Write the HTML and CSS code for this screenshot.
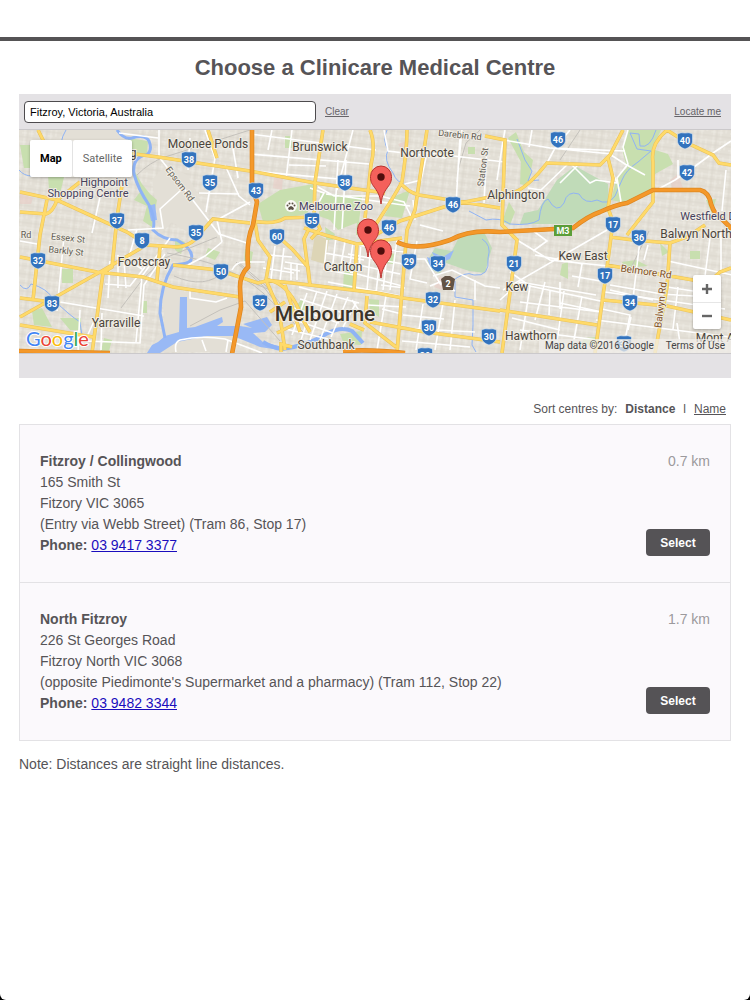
FILE: index.html
```html
<!DOCTYPE html>
<html lang="en">
<head>
<meta charset="utf-8">
<meta name="viewport" content="width=device-width, initial-scale=1">
<title>Choose a Clinicare Medical Centre</title>
<link rel="stylesheet" href="styles.css">
</head>
<body>
<div class="page">
  <header class="top-bar"></header>
  <main class="content">
    <h1 class="title">Choose a Clinicare Medical Centre</h1>

    <section class="finder" aria-label="Map of centres">
      <form class="search">
        <input class="search-input" type="text" aria-label="Location" value="Fitzroy, Victoria, Australia">
        <a class="small-link" href="#clear">Clear</a>
        <a class="small-link locate" href="#locate">Locate me</a>
      </form>
      <div class="map">
        <svg class="map-art" viewBox="19 130 712 223" preserveAspectRatio="xMidYMid slice" role="img" aria-label="Street map of Melbourne">
          <defs>
            <pattern id="streets" width="19" height="17" patternUnits="userSpaceOnUse" patternTransform="rotate(7)">
              <path d="M0 2H19M0 10H12M3 0V17M10 2V17M15 0V10" stroke="#efece5" stroke-width=".8" fill="none"/>
              <path d="M0 6H19M6 0V17M0 14H19" stroke="#d8d4ca" stroke-width=".7" fill="none"/>
            </pattern>
            <g id="shield">
              <path d="M-7.500-7Q-4-9 0-8Q4-9 7.500-7V1Q6.500 6 0 8Q-6.500 6-7.500 1Z" fill="#3373bd" stroke="#dce8f2" stroke-width=".6"/>
            </g>
            <g id="pin">
              <path d="M0 0C-1.200-10-4-13-7.500-18C-9-20-10.500-22-10.500-27.500A10.500 10.500 0 0 1 10.500-27.500C10.500-22 9-20 7.500-18C4-13 1.200-10 0 0Z" fill="#f4605b" stroke="#b8322e" stroke-width="1"/>
              <circle cx="0" cy="-27" r="3.700" fill="#4f0d0c"/>
            </g>
          </defs>
          <rect x="19" y="130" width="712" height="223" fill="#e3dfd6"/>
          <rect x="19" y="130" width="712" height="223" fill="url(#streets)"/>

          <g class="land">
            <path d="M160 278L184 292L238 300L232 352H148L165 325Z"/>
            <path d="M152 180L168 164L188 176L218 236L200 240L172 222L160 235Z"/>
            <path d="M62 130H128L146 142L134 155H62Z"/>
            <path d="M345 240L372 238L368 263L345 260Z"/>
          </g>
          <g class="park">
            <path d="M20 145H34V168H24ZM48 175L64 177L60 194L49 190Z"/>
            <path d="M128 138L148 141L147 154L135 157L129 150ZM134 170L142 184L150 194L157 200L152 227L143 221L147 206L134 200L140 192Z"/>
            <path d="M285 136H292V148H285ZM280 190L313 184L314 198L307 214L263 222L258 204Z"/>
            <path d="M320 193L362 197L359 222L338 230L330 220L319 216ZM357 222H371V237L356 235Z"/>
            <path d="M440 150H448V158H440ZM468 147H475V154H468ZM395 196L410 190L402 218L384 216Z"/>
            <path d="M508 138L516 132L524 152L533 160L528 186L520 184L521 162ZM509 202L515 212L510 225L502 222Z"/>
            <path d="M628 130H661L652 149L668 154L673 164L655 174L651 194L626 203L611 200L617 177L627 168L622 149Z"/>
            <path d="M344 270L354 263L354 289L343 288ZM369 299L379 300L379 317L370 311ZM384 252L396 254L393 264L382 263Z"/>
            <path d="M62 269H73V283H62ZM32 311L42 308L52 327L34 325ZM60 318H81V330H70ZM142 301H147V313H142ZM175 238L185 242L181 254L175 250ZM104 338L112 340L109 351H101Z"/>
            <path d="M340 334L362 331L361 345L344 344ZM302 299L307 308L301 316L294 308ZM325 227L335 234L333 240H326Z"/>
            <path d="M562 264L568 262L568 279L560 275ZM622 262L636 260L648 266L624 268ZM690 251H700V259H690ZM660 243L669 252L662 256ZM694 297H707V302H694ZM584 338L596 337L594 345L581 344ZM706 200L716 199L712 214Z"/>
            <path d="M208 248L220 252L215 260L205 256ZM245 249L253 252L251 264L244 262Z"/>
          </g>
          <g class="reserve">
            <path d="M557 180L575 166L608 184L609 205L586 218L572 224H520L524 213L538 210Z"/>
            <path d="M427 261L435 248L452 251L459 237L484 232L492 248L485 273L469 271L446 263L440 274L430 269Z"/>
          </g>
          <path class="suburb" d="M274 178L283 176L282 190L273 188ZM398 144L407 141L404 153ZM440 276L446 279L442 290L434 287ZM20 193L33 198L31 204L20 204ZM670 180L678 174L683 188H672Z"/>
          <path class="cemetery" d="M315 234L329 240L325 264L311 260Z"/>

          <g class="water">
            <path d="M165 336L179 332L180 297H187V328L195 327L222 317L223 322L217 326H240L252 328L243 324L267 317L272 325L265 332L253 333L263 342L283 347L280 350L260 347L233 336H207L177 342L160 353H147L152 345L158 342Z"/>
            <path d="M427 257L436 260L432 252L443 257L454 250L450 259L440 263V269L430 267Z"/>
            <path d="M148 206L155 204L157 220L151 221Z"/>
          </g>
          <g class="river">
            <path d="M117 130Q124 140 132 138Q145 134 149 141Q153 151 146 155Q132 157 134 174Q138 189 149 205Q156 219 153 230Q163 240 177 240Q195 250 191 260Q189 264 173 265Q160 287 160 313L165 338" stroke-width="3"/>
            <path d="M263 342Q273 348 282 349Q310 345 326 334Q341 326 352 331L363 343" stroke-width="4"/>
            <path d="M387 130Q382 140 388 150Q383 160 393 173Q397 184 407 184" stroke-width="1"/>
            <path d="M656 130Q650 149 640 146L639 134L630 133L637 149L651 151L638 162Q626 170 622 180L615 196Q608 206 597 200Q585 205 579 194Q567 190 564 203Q557 215 548 199Q541 201 539 220Q530 226 510 224Q500 217 486 220L469 211" stroke-width="1"/>
            <path d="M517 139L525 160L532 171L528 181L539 180" stroke-width="1"/>
            <path d="M20 285Q27 293 31 284Q47 288 54 300Q69 315 80 322L82 336" stroke-width="1"/>
            <path d="M473 300V325L472 345L476 352M455 281V297L473 300M450 283Q465 270 474 275Q490 277 488 258Q492 245 482 239" stroke-width="1"/>
            <path d="M66 130Q58 143 63 153Q44 170 32 176Q24 176 19 170" stroke-width="1"/>
          </g>

          <g class="rail">
            <path d="M137 175Q150 162 165 157L250 130M167 253Q230 263 263 293L304 333M121 308L142 280L165 258L217 237M174 276Q205 290 225 271L270 290M190 326L220 310L245 301L280 341M480 130L466 143L458 170M560 160L580 130M630 270L649 231M236 262L262 285L278 305M238 262L265 285L280 303"/>
          </g>
          <g class="street">
            <path d="M159 130L159 157L185 190L219 234L250 244M119 133L158 138M190 138L188 170M205 130L215 158L206 212M170 238L142 276L136 342M60 302L144 316M64 236L57 311M95 319L85 341L140 343L144 285L165 254M222 242L205 256L188 265M222 242L217 220L250 202M225 165L239 196L250 205M100 197L92 233M128 230L163 228L160 209L181 190M20 241L37 244M105 284L130 286L145 267M110 261L108 298M80 310L78 352M118 255V288M124 260L126 288M137 229L128 260L142 269M102 313L101 350M232 142L238 178M199 193L239 194M232 270Q236 262 244 262H265"/>
            <path d="M250 134L376 150M250 154L369 164M250 171L350 180M272 130L268 150M292 130L286 179M353 130L337 190M318 187L334 196L380 196L404 202L411 216M326 194L410 206M338 160L334 230M346 160L342 229M384 130L388 151L446 158M447 130L460 136L456 205M462 130L457 182M487 147L484 203M401 185L421 180L427 153L505 162M413 200L415 220M368 202L363 232M289 165L326 166M310 188L324 193L319 202"/>
            <path d="M504 140L550 148L625 151M532 130L529 147M570 130L555 148L547 163M551 148L611 154M611 155L625 164L645 175M570 163L590 183L596 180L617 183L611 169M570 162L541 190L528 188M577 166L560 183M628 130L623 147L628 164L617 178L621 202M653 192L675 180L694 167L713 153L731 141M726 170L722 211M678 160V178"/>
            <path d="M325 253L364 260M326 270L354 275M327 240L324 270M336 237L332 271M345 242L340 270M353 242L349 272M361 242L359 270M371 244L367 290M380 257L376 293M389 238L383 290M397 240L390 290M357 245L404 252M348 254L403 264M349 263L400 274M350 272L402 286M328 282L401 296M386 296L377 350M382 309L402 314M367 305L406 307M381 285L405 288M409 259L425 259L441 285M417 241L410 279L427 283M423 304L416 350M443 303L435 350M403 315L444 319M401 328L475 332M402 341L470 347M433 276L452 270L485 286L500 288M455 291L440 282L430 286M455 300L450 350M475 280V300"/>
            <path d="M300 299L343 313M294 308L339 323M289 318L333 333M286 329L328 339M307 293L292 335M317 291L301 340M327 291L310 340M337 294L320 340M348 297L331 337M356 303L343 327M299 287L359 303M268 255L292 257M263 268L294 273M275 246L271 279M284 248L280 281M352 300L372 330M285 262L304 265M284 268L300 271M291 263V280M297 264V280"/>
            <path d="M517 240L550 260L608 266M503 290L607 230M500 300L520 282L596 295M535 255L583 264M545 282L535 320M550 291L549 315M564 291L557 342M582 296L574 340M560 282V309M520 302L601 312M525 285L605 302M582 264L578 287M572 276L606 282M560 303L602 312M512 318L560 330M520 330L606 341M605 270L600 317M596 320L730 337M610 285L662 294L693 296M602 309L630 315L625 340M640 240L632 307M648 245L644 260M668 261L732 275M667 287L693 291M711 230L705 276M678 287L673 329M721 233V270M605 292L725 309"/>
            <path d="M505 130L503 141L497 180M610 290L653 300M631 317L628 330M677 323L681 350M532 230L547 241L533 251M510 272L530 286L520 350M420 225L443 231M176 352Q174 342 180 340Q200 335 225 339L262 353M202 340L206 351M228 340L226 352M190 291L190 298L216 302L227 298"/>
          </g>

          <g class="road-edge">
            <g id="main-roads">
              <path d="M38 130L45 144M119 152L158 157L250 171L315 183L385 193M20 192L57 200L127 232L147 245L177 247Q193 246 203 230L213 219L250 223M20 212L46 214Q53 212 57 200L80 182M47 200L40 235L33 300M122 185L117 218L112 267L103 273L92 353M20 257L97 272L143 277L173 287L240 297M20 317L100 272L143 247M20 298L60 303M20 325L93 337M173 265L218 270L258 283L270 280M160 247L157 280M208 130L217 158M265 280L310 285L377 293L403 298L500 311"/>
              <path d="M323 130L315 182L314 218L304 239L310 285M370 130Q376 145 371 165L365 218M407 130Q407 150 402 182Q395 195 380 218L364 242M427 130L415 210L407 230L397 353M400 182Q407 192 419 195L500 208M372 237L400 221L450 205L515 192Q528 187 547 163L600 165L610 155L623 130M608 158L613 178L608 208L613 222L608 260L595 353M485 136L505 140L502 225L517 240L502 353M667 130Q650 144 653 162L653 202L627 235M667 130L687 143L713 155L719 163L731 165M610 237L633 240L670 243L687 237L705 225M670 243L667 287L655 353M607 265L693 280L710 281L720 272L731 268M603 300L667 306L731 320M500 310L597 325M252 221Q275 225 285 218L315 217L320 229L311 239M255 222L258 240L270 257L266 280L279 310L285 350M304 228L325 235L357 244L402 238M280 238L293 250L308 267L310 285M268 280Q290 283 303 320L310 332M285 285L300 332M270 312L285 302M277 333L293 325M357 243L354 290M367 296L365 323L396 347M370 322L425 332L500 342M350 324L364 330M281 352V344L292 347"/>
            </g>
          </g>
          <use class="road" href="#main-roads"/>
          <g class="freeway-edge" id="freeways">
            <path d="M252 128L252 182Q253 190 257 202L253 225Q246 240 248 267Q240 275 240 287L241 307L232 354M397 242Q415 252 450 240Q470 229 500 232L573 228Q588 216 600 212Q615 205 627 203L653 190H700Q709 192 711 204Q715 216 722 219L732 229"/>
            <path d="M19 351L110 353M343 351Q370 349 405 353"/>
          </g>
          <g class="freeway">
            <path d="M252 128L252 182Q253 190 257 202L253 225Q246 240 248 267Q240 275 240 287L241 307L232 354M397 242Q415 252 450 240Q470 229 500 232L573 228Q588 216 600 212Q615 205 627 203L653 190H700Q709 192 711 204Q715 216 722 219L732 229"/>
            <path d="M19 351L110 353M343 351Q370 349 405 353"/>
          </g>

          <g class="route">
            <use href="#shield" x="189" y="160"/><text x="189" y="163">38</text>
            <use href="#shield" x="210" y="183"/><text x="210" y="186">35</text>
            <use href="#shield" x="117" y="221"/><text x="117" y="224">37</text>
            <use href="#shield" x="196" y="233"/><text x="196" y="236">35</text>
            <use href="#shield" x="142" y="241"/><text x="142" y="244">8</text>
            <use href="#shield" x="38" y="261"/><text x="38" y="264">32</text>
            <use href="#shield" x="221" y="272"/><text x="221" y="275">50</text>
            <use href="#shield" x="52" y="304"/><text x="52" y="307">83</text>
            <use href="#shield" x="256" y="191"/><text x="256" y="194">43</text>
            <use href="#shield" x="345" y="183"/><text x="345" y="186">38</text>
            <use href="#shield" x="312" y="221"/><text x="312" y="224">55</text>
            <use href="#shield" x="277" y="237"/><text x="277" y="240">60</text>
            <use href="#shield" x="389" y="228"/><text x="389" y="231">46</text>
            <use href="#shield" x="453" y="205"/><text x="453" y="208">46</text>
            <use href="#shield" x="558" y="140"/><text x="558" y="143">46</text>
            <use href="#shield" x="685" y="141"/><text x="685" y="144">40</text>
            <use href="#shield" x="687" y="173"/><text x="687" y="176">42</text>
            <use href="#shield" x="613" y="225"/><text x="613" y="228">17</text>
            <use href="#shield" x="639" y="238"/><text x="639" y="241">36</text>
            <use href="#shield" x="409" y="262"/><text x="409" y="265">29</text>
            <use href="#shield" x="438" y="264"/><text x="438" y="267">34</text>
            <use href="#shield" x="514" y="264"/><text x="514" y="267">21</text>
            <use href="#shield" x="605" y="276"/><text x="605" y="279">17</text>
            <use href="#shield" x="630" y="303"/><text x="630" y="306">34</text>
            <use href="#shield" x="260" y="303"/><text x="260" y="306">32</text>
            <use href="#shield" x="433" y="300"/><text x="433" y="303">32</text>
            <use href="#shield" x="429" y="328"/><text x="429" y="331">30</text>
            <use href="#shield" x="489" y="337"/><text x="489" y="340">30</text>
            <use href="#shield" x="425" y="356"/><text x="425" y="359">20</text>
            <use href="#shield" x="624" y="344"/><text x="624" y="347">30</text>
            <path d="M441 279L445 276H450L455 279L453 290H443Z" fill="#635345"/><text x="448" y="287">2</text>
            <rect x="554" y="225" width="18" height="11" fill="#5b9e38"/><text x="563" y="234">M3</text>
          </g>

          <g class="poi">
            <circle cx="291" cy="206" r="6" fill="#fbfaf6"/>
            <path d="M288 209Q288 207 291 206Q294 207 294 209Q292 211 291 209Q290 211 288 209Z" fill="#5b5145"/>
            <circle cx="287.500" cy="205.500" r="1" fill="#5b5145"/><circle cx="289.500" cy="203.500" r="1" fill="#5b5145"/><circle cx="292.500" cy="203.500" r="1" fill="#5b5145"/><circle cx="294.500" cy="205.500" r="1" fill="#5b5145"/>
          </g>
          <g class="label">
            <text x="208" y="148">Moonee Ponds</text>
            <text x="133" y="157">g</text>
            <text x="320" y="151">Brunswick</text>
            <text x="427" y="157">Northcote</text>
            <text x="516" y="199">Alphington</text>
            <text x="144" y="266">Footscray</text>
            <text x="116" y="327">Yarraville</text>
            <text x="343" y="271">Carlton</text>
            <text x="326" y="349">Southbank</text>
            <text x="583" y="260">Kew East</text>
            <text x="517" y="291">Kew</text>
            <text x="531" y="340">Hawthorn</text>
            <text x="696" y="238">Balwyn North</text>
            <text x="715" y="342">Mont A</text>
          </g>
          <text class="city" x="325" y="321">Melbourne</text>
          <g class="place">
            <text x="104" y="186">Highpoint</text>
            <text x="88" y="197">Shopping Centre</text>
            <text x="336" y="210">Melbourne Zoo</text>
            <text x="708" y="220">Westfield D</text>
          </g>
          <g class="road-name">
            <text x="68" y="241" transform="rotate(6 68 238)">Essex St</text>
            <text x="66" y="254" transform="rotate(6 66 251)">Barkly St</text>
            <text x="26" y="238">Rd</text>
            <text x="460" y="138" transform="rotate(6 460 135)">Darebin Rd</text>
            <text x="180" y="187" transform="rotate(53 180 184)">Epsom Rd</text>
            <text x="483" y="170" transform="rotate(-83 483 167)">Station St</text>
          </g>
          <g class="main-name">
            <text x="646" y="275" transform="rotate(8 646 272)">Belmore Rd</text>
            <text x="661" y="308" transform="rotate(-83 661 305)">Balwyn Rd</text>
          </g>
          <use href="#pin" x="381" y="204"/>
          <use href="#pin" x="368" y="257"/>
          <use href="#pin" x="381" y="278"/>
          <text class="brand" x="26" y="346"><tspan fill="#4285f4">G</tspan><tspan fill="#ea4335">o</tspan><tspan fill="#fbbc05">o</tspan><tspan fill="#4285f4">g</tspan><tspan fill="#34a853">l</tspan><tspan fill="#ea4335">e</tspan></text>
        </svg>
        <div class="map-type">
          <button class="type-button type-active" type="button">Map</button>
          <button class="type-button" type="button">Satellite</button>
        </div>
        <div class="zoom">
          <button class="zoom-button" type="button" aria-label="Zoom in"><svg width="12" height="12" viewBox="0 0 12 12"><path d="M6 1V11M1 6H11" stroke="#666" stroke-width="2.400"/></svg></button>
          <button class="zoom-button" type="button" aria-label="Zoom out"><svg width="12" height="12" viewBox="0 0 12 12"><path d="M1 6H11" stroke="#666" stroke-width="2.400"/></svg></button>
        </div>
        <div class="credits"><span>Map data ©2016 Google</span><a class="terms" href="#terms">Terms of Use</a></div>
      </div>
    </section>

    <nav class="sort" aria-label="Sort centres">
      <span>Sort centres by:</span>
      <strong>Distance</strong>
      <span>l</span>
      <a class="sort-link" href="#name">Name</a>
    </nav>

    <ul class="centres">
      <li class="centre">
        <div class="details">
          <strong>Fitzroy / Collingwood</strong>
          <span>165 Smith St</span>
          <span>Fitzory VIC 3065</span>
          <span>(Entry via Webb Street) (Tram 86, Stop 17)</span>
          <span><strong>Phone:</strong> <a class="phone" href="tel:0394173377">03 9417 3377</a></span>
        </div>
        <div class="side">
          <span class="distance">0.7 km</span>
          <button class="select" type="button">Select</button>
        </div>
      </li>
      <li class="centre">
        <div class="details">
          <strong>North Fitzroy</strong>
          <span>226 St Georges Road</span>
          <span>Fitzroy North VIC 3068</span>
          <span>(opposite Piedimonte's Supermarket and a pharmacy) (Tram 112, Stop 22)</span>
          <span><strong>Phone:</strong> <a class="phone" href="tel:0394823344">03 9482 3344</a></span>
        </div>
        <div class="side">
          <span class="distance">1.7 km</span>
          <button class="select" type="button">Select</button>
        </div>
      </li>
    </ul>
    <p class="note">Note: Distances are straight line distances.</p>
  </main>
</div>
</body>
</html>
```
FILE: styles.css
```css
* { box-sizing: border-box; }
body {
  margin: 0;
  background: #000;
  color: #565457;
  font: 14px/21px "Liberation Sans", Arial, sans-serif;
}
.page {
  min-height: 100vh;
  background: #fff;
  border-radius: 0 0 6px 6px;
}
.top-bar {
  height: 41px;
  border-bottom: 4px solid #555355;
}
.content { padding: 0 19px; }
.title {
  margin: 0;
  padding: 12px 0 11px;
  font-size: 22px;
  line-height: 30px;
  text-align: center;
}
.finder {
  padding-bottom: 24px;
  background: #e4e2e5;
}
.search {
  display: flex;
  align-items: center;
  gap: 9px;
  height: 35px;
  padding: 0 10px 0 5px;
}
.search-input {
  width: 292px;
  height: 22px;
  padding: 0 5px;
  border: 1px solid #4d4b4e;
  border-radius: 4px;
  background: #fff;
  color: #000;
  font: 11px "Liberation Sans", Arial, sans-serif;
}
.small-link {
  color: #666468;
  font-size: 10px;
}
.locate { margin-left: auto; }
.map {
  position: relative;
  height: 225px;
  border: 1px solid #cbc9cb;
  border-width: 1px 0;
  overflow: hidden;
  font-family: Roboto, sans-serif;
}
.map-art {
  display: block;
  width: 100%;
  height: 100%;
}
.land { fill: #e3dfd6; }
.park { fill: #c8dfaf; }
.reserve { fill: #c0dbb8; }
.suburb { fill: #e8ccc5; opacity: .6; }
.cemetery { fill: #ddd5b6; }
.water { fill: #99b9f5; }
.river { fill: none; stroke: #8fb3f5; }
.rail { fill: none; stroke: #c4c1bb; stroke-width: 1; }
.street { fill: none; stroke: #fff; stroke-width: 1.600; }
.road-edge { fill: none; stroke: #e9c25c; stroke-width: 3.600; }
.road { fill: none; stroke: #ffda69; stroke-width: 2.500; }
.freeway-edge { fill: none; stroke: #dd861f; stroke-width: 4.600; }
.freeway { fill: none; stroke: #f4982a; stroke-width: 3.200; }
.route text {
  fill: #fff;
  font-size: 9px;
  font-weight: 700;
  text-anchor: middle;
}
.label, .city, .place, .road-name, .main-name {
  fill: #4b443b;
  stroke: #f0ede5;
  stroke-width: 2px;
  stroke-linejoin: round;
  paint-order: stroke;
}
.label { font-size: 12px; }
.label text, .place text, .road-name text, .main-name text { text-anchor: middle; }
.city { font-size: 21px; font-weight: 500; fill: #3b3429; text-anchor: middle; }
.place { font-size: 11px; fill: #46415c; }
.road-name { font-size: 9px; fill: #625c53; }
.main-name { font-size: 10px; fill: #81501e; }
.brand {
  font-family: Lato, sans-serif;
  font-size: 20px;
  font-weight: 400;
  stroke: #fff;
  stroke-width: 2px;
  paint-order: stroke;
}
.map-type {
  position: absolute;
  top: 10px;
  left: 11px;
  display: flex;
  border-radius: 2px;
  box-shadow: 0 1px 3px rgba(0, 0, 0, .3);
}
.type-button {
  height: 37px;
  padding: 0 10px;
  border: 0;
  border-radius: 2px;
  background: #fff;
  color: #666;
  font: 11px Roboto, sans-serif;
}
.type-active {
  border-right: 1px solid #e3e3e3;
  color: #000;
  font-weight: 700;
}
.zoom {
  position: absolute;
  right: 10px;
  bottom: 24px;
  display: flex;
  flex-direction: column;
  width: 28px;
  border-radius: 2px;
  background: #fff;
  box-shadow: 0 1px 3px rgba(0, 0, 0, .3);
}
.zoom-button {
  display: flex;
  align-items: center;
  justify-content: center;
  height: 27px;
  padding: 0;
  border: 0;
  background: none;
}
.zoom-button + .zoom-button { border-top: 1px solid #e6e6e6; }
.credits {
  position: absolute;
  right: 0;
  bottom: 0;
  display: flex;
  gap: 12px;
  padding: 0 6px;
  background: rgba(240, 238, 233, .75);
  color: #444;
  font-size: 10px;
  line-height: 14px;
}
.terms { color: #444; text-decoration: none; }
.sort {
  display: flex;
  justify-content: flex-end;
  gap: 8px;
  padding: 21px 5px 4px 0;
  font-size: 12px;
}
.sort-link { color: #565457; }
.centres {
  margin: 0;
  padding: 0;
  border: 1px solid #e3e2e5;
  border-bottom: 0;
  background: #fbf9fc;
  list-style: none;
}
.centre {
  display: flex;
  justify-content: space-between;
  gap: 20px;
  padding: 26px 20px;
  border-bottom: 1px solid #e3e2e5;
}
.details {
  display: flex;
  flex-direction: column;
}
.phone { color: #1a0dbd; }
.side {
  display: flex;
  flex-direction: column;
  align-items: flex-end;
  justify-content: space-between;
}
.distance { color: #9c9a9d; }
.select {
  width: 64px;
  height: 27px;
  padding: 0;
  border: 0;
  border-radius: 4px;
  background: #555356;
  color: #fff;
  font: bold 12px "Liberation Sans", Arial, sans-serif;
}
.note { margin: 13px 0; }
```
